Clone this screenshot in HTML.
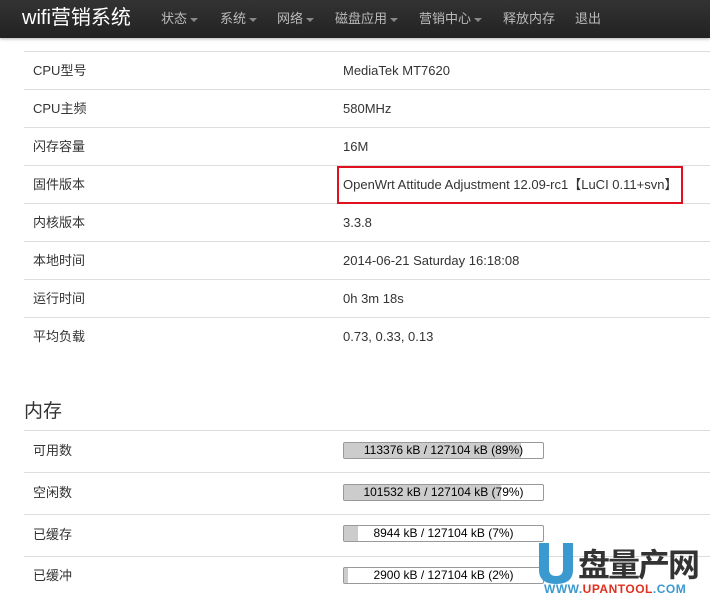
<!DOCTYPE html>
<html><head><meta charset="utf-8"><style>
body{margin:0;width:710px;height:605px;overflow:hidden;background:#fff;font-family:"Liberation Sans","Noto Sans CJK SC",sans-serif;font-size:13px;color:#333;position:relative}
.nav{position:absolute;left:0;top:0;width:710px;height:38px;background:linear-gradient(#333,#222);box-shadow:0 1px 3px rgba(0,0,0,.3)}
.brand{position:absolute;left:22px;top:6px;font-size:20px;color:#fff;line-height:24px}
.nav span.i{position:absolute;top:11px;font-size:13px;color:#bbb;line-height:16px}
.car{display:inline-block;border-left:4px solid transparent;border-right:4px solid transparent;border-top:4px solid #888;vertical-align:middle;margin-left:3px}
.row{position:absolute;left:24px;width:686px;border-top:1px solid #ddd}
.row span{line-height:16px;height:16px;display:block}
.row .l{position:absolute;left:9px}
.row .v{position:absolute;left:319px}
h3{position:absolute;left:24px;top:400px;margin:0;font-weight:normal;font-size:19px;line-height:24px;color:#333}
.bar{position:absolute;left:319px;width:199px;height:15px;border:1px solid #999;border-radius:2px;background:#fff;overflow:hidden}
.bar i{position:absolute;left:0;top:0;bottom:0;background:#ccc}
.bar b{position:absolute;left:0;right:0;top:0;text-align:center;font-weight:normal;font-size:12px;line-height:15px;color:#000}
</style></head><body>
<div class="nav">
<div class="brand">wifi营销系统</div>
<span class="i" style="left:161px">状态<i class="car"></i></span>
<span class="i" style="left:220px">系统<i class="car"></i></span>
<span class="i" style="left:277px">网络<i class="car"></i></span>
<span class="i" style="left:335px">磁盘应用<i class="car"></i></span>
<span class="i" style="left:419px">营销中心<i class="car"></i></span>
<span class="i" style="left:503px">释放内存</span>
<span class="i" style="left:575px">退出</span>
</div>
<div class="row" style="top:51px;height:37px"><span class="l" style="top:11px">CPU型号</span><span class="v" style="top:11px">MediaTek MT7620</span></div>
<div class="row" style="top:89px;height:37px"><span class="l" style="top:11px">CPU主频</span><span class="v" style="top:11px">580MHz</span></div>
<div class="row" style="top:127px;height:37px"><span class="l" style="top:11px">闪存容量</span><span class="v" style="top:11px">16M</span></div>
<div class="row" style="top:165px;height:37px"><span class="l" style="top:11px">固件版本</span><span class="v" style="top:11px">OpenWrt Attitude Adjustment 12.09-rc1【LuCI 0.11+svn】</span></div>
<div class="row" style="top:203px;height:37px"><span class="l" style="top:11px">内核版本</span><span class="v" style="top:11px">3.3.8</span></div>
<div class="row" style="top:241px;height:37px"><span class="l" style="top:11px">本地时间</span><span class="v" style="top:11px">2014-06-21 Saturday 16:18:08</span></div>
<div class="row" style="top:279px;height:37px"><span class="l" style="top:11px">运行时间</span><span class="v" style="top:11px">0h 3m 18s</span></div>
<div class="row" style="top:317px;height:37px"><span class="l" style="top:11px">平均负载</span><span class="v" style="top:11px">0.73, 0.33, 0.13</span></div>
<div style="position:absolute;left:337px;top:166px;width:342px;height:34px;border:2px solid #e01020"></div>
<h3>内存</h3>
<div class="row" style="top:430px;height:41px"><span class="l" style="top:12px">可用数</span><div class="bar" style="top:11px"><i style="width:89%"></i><b>113376 kB / 127104 kB (89%)</b></div></div>
<div class="row" style="top:472px;height:41px"><span class="l" style="top:12px">空闲数</span><div class="bar" style="top:11px"><i style="width:79%"></i><b>101532 kB / 127104 kB (79%)</b></div></div>
<div class="row" style="top:514px;height:41px"><span class="l" style="top:12px">已缓存</span><div class="bar" style="top:10px"><i style="width:7%"></i><b>8944 kB / 127104 kB (7%)</b></div></div>
<div class="row" style="top:556px;height:49px"><span class="l" style="top:11px">已缓冲</span><div class="bar" style="top:10px"><i style="width:2%"></i><b>2900 kB / 127104 kB (2%)</b></div></div>
<svg style="position:absolute;left:536px;top:543px" width="40" height="42"><path d="M3 0h10v26q0 7 7 7t7-7V0h10v27q0 14-17 14T3 27z" fill="#3a9ad0"/></svg>
<div style="position:absolute;left:578px;top:540px;font-size:32px;font-weight:bold;color:#333;letter-spacing:-2px">盘量产网</div>
<div style="position:absolute;left:544px;top:582px;font-size:12px;font-weight:bold;color:#3a9ad0;letter-spacing:.5px">WWW.<span style="color:#e03020">UPANTOOL</span>.COM</div>
</body></html>
